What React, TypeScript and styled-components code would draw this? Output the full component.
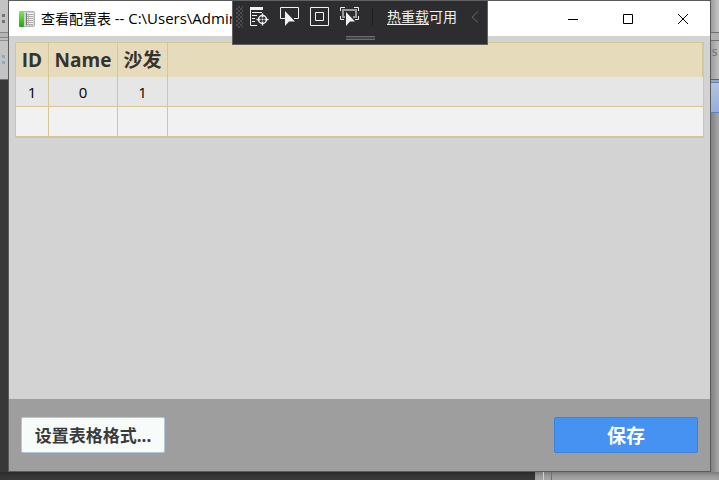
import React from "react";
import styled, { createGlobalStyle } from "styled-components";

const GlobalStyle = createGlobalStyle`
  *, *::before, *::after { box-sizing: border-box; }
  body {
    margin: 0;
    font-family: "Open Sans", "Noto Sans CJK SC", sans-serif;
    color: #000;
  }
  button { font: inherit; color: inherit; padding: 0; margin: 0; border: 0; background: none; }
`;

const Desktop = styled.div`
  display: grid;
  grid-template-columns: 8px minmax(0, 1fr) 8px;
  grid-template-rows: minmax(0, 1fr) 8px;
  min-height: 100vh;
  overflow: hidden;
  background: #383839;
`;

const Side = styled.div`
  display: flex;
  flex-direction: column;
  min-width: 0;
  overflow: hidden;
`;

const Band = styled.div<{ $h?: number; $bg: string; $line?: string }>`
  flex: ${(p) => (p.$h ? `0 0 ${p.$h}px` : "1")};
  background: ${(p) => p.$bg};
  border-bottom: ${(p) => (p.$line ? `1px solid ${p.$line}` : "0")};
  overflow: hidden;
  font-size: 12px;
  line-height: 22px;
  color: #777;
  font-family: "DejaVu Sans Mono", monospace;
  white-space: nowrap;
`;

const Dots = styled.div<{ $color: string }>`
  width: 3px;
  height: 9px;
  margin: 14px 0 0 2px;
  border: solid ${(p) => p.$color};
  border-width: 3px 0;
`;

const BottomStrip = styled.div`
  grid-column: 1 / -1;
  display: flex;
  justify-content: flex-end;
  box-shadow: inset 0 5px 5px -3px rgba(0, 0, 0, 0.3);
`;

const BottomRight = styled.div`
  flex: 0 0 184px;
  background: #a4a3a3;
  box-shadow: inset 0 5px 5px -3px rgba(0, 0, 0, 0.3);
  display: flex;
  gap: 7px;
  padding-left: 8px;

  &::before, &::after {
    content: "";
    width: 1px;
    background: #cfcfcf;
  }
  &::after { background: #707070; }
`;

const Window = styled.main`
  position: relative;
  display: flex;
  flex-direction: column;
  border: 1px solid #5b5b5b;
  background: #d3d3d3;
`;

const TitleBar = styled.header`
  display: flex;
  align-items: center;
  height: 35px;
  padding-left: 10px;
  background: #fff;
`;

const Title = styled.h1`
  flex: 1;
  margin: 0 0 0 6px;
  font-size: 14px;
  font-weight: 400;
  line-height: 20px;
  white-space: nowrap;
  overflow: hidden;
`;

const FilePath = styled.span`
  font-size: 15px;
`;

const WindowButton = styled.button`
  width: 55px;
  height: 35px;
  display: flex;
  align-items: center;
  justify-content: center;
`;

const Content = styled.section`
  flex: 1;
  padding: 6px 6px 0;
`;

const Table = styled.table`
  width: 100%;
  table-layout: fixed;
  border-collapse: separate;
  border-spacing: 0;
  border: 1px solid #d5c698;
`;

const Col = styled.col<{ $w?: number }>`
  width: ${(p) => (p.$w ? `${p.$w}px` : "auto")};
`;

const HeadCell = styled.th`
  height: 34px;
  padding: 0;
  border-right: 1px solid #d5c698;
  background: #e6dbba;
  color: #333;
  font-size: 19px;
  font-weight: 700;
  line-height: 28px;
  white-space: nowrap;
`;

const Cell = styled.td<{ $alt?: boolean }>`
  height: 30px;
  padding: 0;
  border-right: 1px solid #d5c698;
  border-bottom: 1px solid #d5c698;
  background: ${(p) => (p.$alt ? "#f1f1f1" : "#e6e6e6")};
  font-size: 15px;
  line-height: 20px;
  text-align: center;

  &:last-child { border-right: 0; }
`;

const Footer = styled.footer`
  display: flex;
  align-items: flex-start;
  justify-content: space-between;
  height: 72px;
  padding: 18px 12px 0;
  background: #9e9e9e;
`;

const ActionButton = styled.button<{ $primary?: boolean }>`
  width: 144px;
  height: 36px;
  border: 1px solid ${(p) => (p.$primary ? "#3b82dc" : "#b3c6dc")};
  border-radius: 2px;
  background: ${(p) => (p.$primary ? "#4592f2" : "#f7fcfb")};
  color: ${(p) => (p.$primary ? "#fff" : "#3b3b3b")};
  font-size: ${(p) => (p.$primary ? 19 : 17)}px;
  font-weight: 700;
  line-height: 24px;
  padding-top: 2px;
  white-space: nowrap;
`;

const DebugBar = styled.div`
  position: absolute;
  top: -1px;
  left: 223px;
  width: 256px;
  height: 45px;
  display: flex;
  flex-direction: column;
  justify-content: space-between;
  border: 1px solid #606062;
  background: #2d2d30;
  color: #f1f1f1;
`;

const DebugTools = styled.div`
  display: flex;
  align-items: center;
  height: 32px;
  padding-left: 3px;
`;

const Grip = styled.div`
  flex: none;
  width: 7px;
  height: 22px;
  margin-right: 2px;
  background-image:
    conic-gradient(#4c4c50 25%, transparent 0),
    conic-gradient(#4c4c50 25%, transparent 0);
  background-size: 4px 4px;
  background-position: 0 0, 2px 2px;
`;

const ToolButton = styled.button<{ $narrow?: boolean }>`
  flex: none;
  width: ${(p) => (p.$narrow ? 20 : 30)}px;
  height: 30px;
  display: flex;
  align-items: center;
  justify-content: center;
`;

const Divider = styled.div`
  flex: none;
  width: 1px;
  height: 18px;
  margin: 0 14px 0 7px;
  background: #1f1f21;
`;

const HotReload = styled.div`
  flex: none;
  width: 78px;
  font-size: 14px;
  line-height: 20px;
  white-space: nowrap;

  a { color: inherit; text-decoration: underline; text-underline-offset: 2px; }
`;

const DragHandle = styled.div`
  width: 29px;
  height: 4px;
  margin: 0 auto 4px;
  border: solid #6c6c6f;
  border-width: 1px 0;
  background: #434346;
`;

const columns = ["ID", "Name", "沙发"];
const rows = [["1", "0", "1"], ["", "", ""]];

const AppIcon = () => (
  <svg width="16" height="16" viewBox="0 0 16 16" aria-hidden="true">
    <defs>
      <linearGradient id="spine" x1="0" y1="0" x2="0" y2="1">
        <stop offset="0" stopColor="#80ee48" />
        <stop offset="1" stopColor="#20a515" />
      </linearGradient>
    </defs>
    <rect x="4" y="0.5" width="11.5" height="15" rx="1" fill="#d2d2d2" stroke="#b2b2b2" />
    <rect x="0" y="0" width="5" height="16" rx="1" fill="url(#spine)" />
    <rect x="7" y="2" width="7" height="12" fill="#f4f4f4" />
    <path d="M7.5 2v12" stroke="#777" />
    <path d="M8 3.5h6M8 5.5h6M8 7.5h6M8 9.5h6M8 11.5h6M8 13.5h6" stroke="#a8a8a8" />
    <path d="M9.5 3v11" stroke="#b8b8b8" />
  </svg>
);

const TreeTargetIcon = () => (
  <svg width="20" height="20" viewBox="0 0 20 20" fill="none" stroke="#f1f1f1" aria-hidden="true">
    <path d="M0 0h13v3H0z" fill="#f1f1f1" stroke="none" />
    <path d="M.5 3v15.5H7M2 5.5h10M2 8.5h5M2 11.5h3M2 14.5h3" />
    <circle cx="12.5" cy="12.5" r="4" strokeWidth="1.5" />
    <path d="M12.5 6.5v4M12.5 14.5v4M6.5 12.5h4M14.5 12.5h4" strokeWidth="1.5" />
    <circle cx="12.5" cy="12.5" r="1" fill="#f1f1f1" stroke="none" />
  </svg>
);

const SelectIcon = () => (
  <svg width="20" height="20" viewBox="0 0 20 20" fill="none" aria-hidden="true">
    <path d="M5 11.5H.5V.5h18v11H14" stroke="#f1f1f1" />
    <path d="M5 4v15l4-4.5h6z" fill="#f1f1f1" />
  </svg>
);

const LayoutIcon = () => (
  <svg width="20" height="20" viewBox="0 0 20 20" fill="none" stroke="#f1f1f1" aria-hidden="true">
    <path d="M.5 .5h18v18H.5zM5.5 5.5h8v8h-8z" />
  </svg>
);

const FocusIcon = () => (
  <svg width="20" height="20" viewBox="0 0 20 20" fill="none" aria-hidden="true">
    <path d="M.5 4V.5H5M14 .5h4.5V4M.5 9v3.5H4M18.5 9v3.5H15" stroke="#f1f1f1" />
    <path d="M5 10H3V3h13v7h-3" stroke="#9a9a9c" strokeWidth="2" />
    <path d="M6 5v14l4-4.5h5z" fill="#f1f1f1" />
  </svg>
);

const tools = [
  { label: "转到实时可视化树", Icon: TreeTargetIcon },
  { label: "选择元素", Icon: SelectIcon },
  { label: "显示布局装饰器", Icon: LayoutIcon },
  { label: "跟踪具有焦点的元素", Icon: FocusIcon },
];

const windowButtons = [
  { label: "最小化", path: "M0 5.5h10" },
  { label: "最大化", path: "M.5 .5h9v9h-9z" },
  { label: "关闭", path: "M0 0l10 10M10 0L0 10" },
];

export default function App() {
  return (
    <>
      <GlobalStyle />
      <Desktop>
        <Side>
          <Band $h={33} $bg="#c3c3c3" $line="#858585"><Dots $color="#77746e" /></Band>
          <Band $h={5} $bg="#b5b5b5" $line="#858585" />
          <Band $h={3} $bg="#bdbdbd" $line="#909090" />
          <Band $h={39} $bg="#c3c3c3" $line="#707070"><Dots $color="#8eabc6" /></Band>
          <Band $bg="#383839" />
        </Side>
        <Window>
          <TitleBar>
            <AppIcon />
            <Title>查看配置表 <FilePath>-- C:\Users\Admin</FilePath></Title>
            {windowButtons.map((b) => (
              <WindowButton key={b.label} type="button" aria-label={b.label}>
                <svg width="10" height="10" viewBox="0 0 10 10" fill="none" stroke="#000">
                  <path d={b.path} />
                </svg>
              </WindowButton>
            ))}
          </TitleBar>
          <Content>
            <Table>
              <colgroup>
                <Col $w={33} />
                <Col $w={69} />
                <Col $w={50} />
                <Col />
              </colgroup>
              <thead>
                <tr>
                  {columns.map((c) => <HeadCell key={c} scope="col">{c}</HeadCell>)}
                  <HeadCell as="td" />
                </tr>
              </thead>
              <tbody>
                {rows.map((r, i) => (
                  <tr key={i}>
                    {r.map((v, j) => <Cell key={j} $alt={i % 2 === 1}>{v}</Cell>)}
                    <Cell $alt={i % 2 === 1} />
                  </tr>
                ))}
              </tbody>
            </Table>
          </Content>
          <Footer>
            <ActionButton type="button">设置表格格式...</ActionButton>
            <ActionButton type="button" $primary>保存</ActionButton>
          </Footer>
          <DebugBar>
            <DebugTools>
              <Grip />
              {tools.map(({ label, Icon }) => (
                <ToolButton key={label} type="button" aria-label={label}><Icon /></ToolButton>
              ))}
              <Divider />
              <HotReload><a href="#hot-reload">热重载</a>可用</HotReload>
              <ToolButton type="button" aria-label="折叠" $narrow>
                <svg width="8" height="12" viewBox="0 0 8 12" fill="none" stroke="#66666a">
                  <path d="M7 .5L1 6l6 5.5" />
                </svg>
              </ToolButton>
            </DebugTools>
            <DragHandle />
          </DebugBar>
        </Window>
        <Side>
          <Band $h={33} $bg="linear-gradient(90deg, #9c9c9c, #c6c6c6)" $line="#707070" />
          <Band $h={8} $bg="#b0b0b0" $line="#707070" />
          <Band $h={39} $bg="linear-gradient(90deg, #9c9c9c, #c0c0c0)" $line="#606060">s</Band>
          <Band $h={3} $bg="#a5a5a5" $line="#5a7fc4" />
          <Band $h={30} $bg="linear-gradient(#b4c4e2, #96aedb)" $line="#5a7fc4" />
          <Band $bg="linear-gradient(90deg, #828282, #a8a8a8)" />
        </Side>
        <BottomStrip>
          <BottomRight />
        </BottomStrip>
      </Desktop>
    </>
  );
}
